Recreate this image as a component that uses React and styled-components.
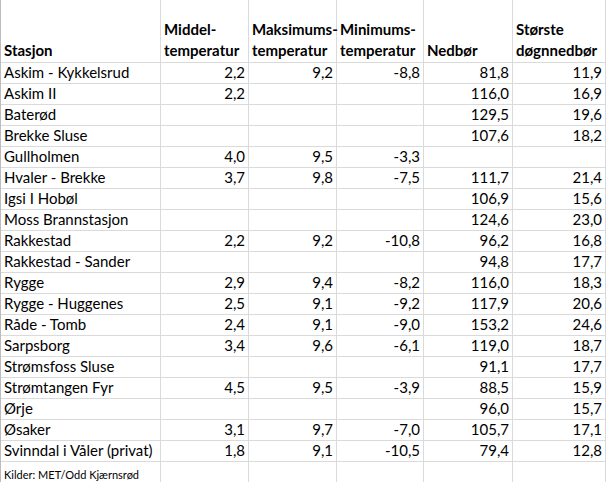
import React from 'react'
import styled, { createGlobalStyle } from 'styled-components'

const GlobalStyle = createGlobalStyle`
  html, body {
    margin: 0;
    padding: 0;
    background: #ffffff;
  }
`

const headers = [
  ['Stasjon'],
  ['Middel-', 'temperatur'],
  ['Maksimums-', 'temperatur'],
  ['Minimums-', 'temperatur'],
  ['Nedbør'],
  ['Største', 'døgnnedbør'],
]

const rows = [
  ['Askim - Kykkelsrud', '2,2', '9,2', '-8,8', '81,8', '11,9'],
  ['Askim II', '2,2', '', '', '116,0', '16,9'],
  ['Baterød', '', '', '', '129,5', '19,6'],
  ['Brekke Sluse', '', '', '', '107,6', '18,2'],
  ['Gullholmen', '4,0', '9,5', '-3,3', '', ''],
  ['Hvaler - Brekke', '3,7', '9,8', '-7,5', '111,7', '21,4'],
  ['Igsi I Hobøl', '', '', '', '106,9', '15,6'],
  ['Moss Brannstasjon', '', '', '', '124,6', '23,0'],
  ['Rakkestad', '2,2', '9,2', '-10,8', '96,2', '16,8'],
  ['Rakkestad - Sander', '', '', '', '94,8', '17,7'],
  ['Rygge', '2,9', '9,4', '-8,2', '116,0', '18,3'],
  ['Rygge - Huggenes', '2,5', '9,1', '-9,2', '117,9', '20,6'],
  ['Råde - Tomb', '2,4', '9,1', '-9,0', '153,2', '24,6'],
  ['Sarpsborg', '3,4', '9,6', '-6,1', '119,0', '18,7'],
  ['Strømsfoss Sluse', '', '', '', '91,1', '17,7'],
  ['Strømtangen Fyr', '4,5', '9,5', '-3,9', '88,5', '15,9'],
  ['Ørje', '', '', '', '96,0', '15,7'],
  ['Øsaker', '3,1', '9,7', '-7,0', '105,7', '17,1'],
  ['Svinndal i Våler (privat)', '1,8', '9,1', '-10,5', '79,4', '12,8'],
]

const Sheet = styled.div`
  display: grid;
  grid-template-columns: 160px 88px 88px 87px 89px 93px;
  grid-template-rows: 63px repeat(20, 21px);
  width: max-content;
  border-left: 1px solid #bcbcbc;
  font-family: Lato, 'Open Sans', sans-serif;
  font-size: 15px;
  color: #000;
`

const Cell = styled.div`
  box-sizing: border-box;
  display: flex;
  align-items: flex-end;
  justify-content: ${(p) => (p.$num ? 'flex-end' : 'flex-start')};
  padding: 0 3px 1px 3px;
  border-right: 1px solid #dadada;
  border-bottom: ${(p) => (p.$last ? 'none' : '1px solid #dadada')};
  line-height: 19px;
  white-space: nowrap;
  overflow: visible;
`

const HeadCell = styled(Cell)`
  flex-direction: column;
  justify-content: flex-end;
  align-items: flex-start;
  font-weight: 700;
  line-height: 21px;
  padding: 0 2px 1px 3px;
`

const Note = styled(Cell)`
  font-size: 11px;
  line-height: 16px;
  padding-bottom: 0;
`

export default function App() {
  return (
    <>
      <GlobalStyle />
      <Sheet>
        {headers.map((h, i) => (
          <HeadCell key={'h' + i}>
            {h.map((line) => (
              <span key={line}>{line}</span>
            ))}
          </HeadCell>
        ))}
        {rows.map((r, ri) =>
          r.map((v, ci) => (
            <Cell key={ri + '-' + ci} $num={ci > 0}>
              {v}
            </Cell>
          ))
        )}
        <Note $last>Kilder: MET/Odd Kjærnsrød</Note>
        {[1, 2, 3, 4, 5].map((i) => (
          <Cell key={'f' + i} $last />
        ))}
      </Sheet>
    </>
  )
}
